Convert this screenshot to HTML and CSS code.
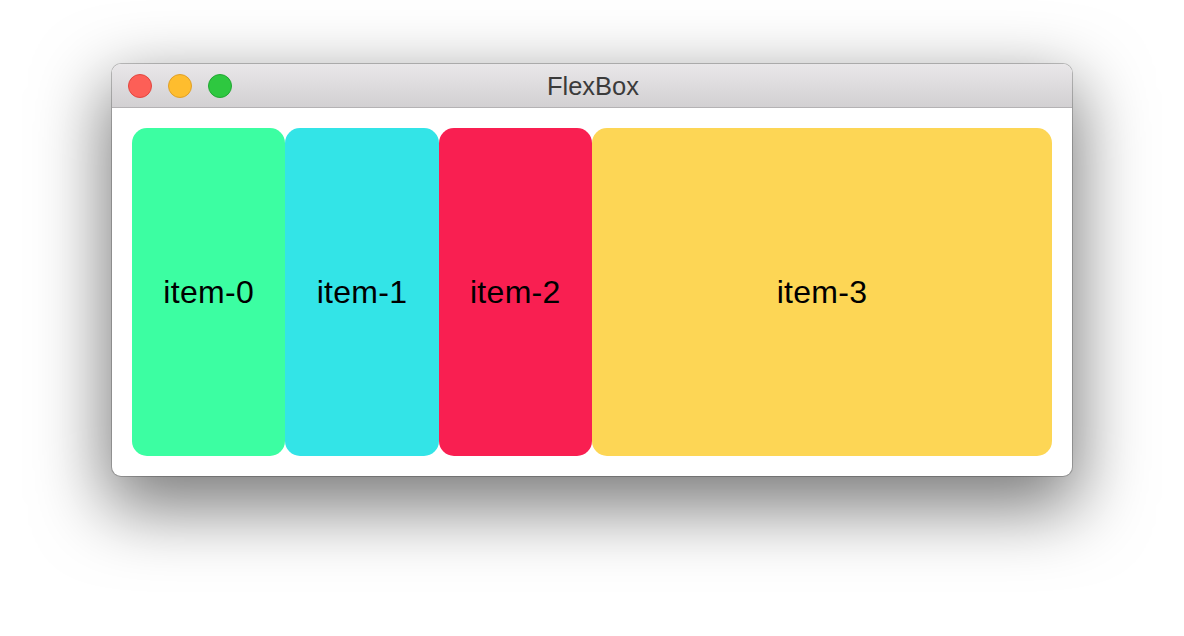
FILE: index.html
```html
<!DOCTYPE html>
<html>
<head>
<meta charset="utf-8">
<title>FlexBox</title>
<link rel="stylesheet" href="styles.css">
</head>
<body>
<div class="stage">
  <div class="window">
    <div class="titlebar">
      <div class="lights">
        <span class="light red"></span>
        <span class="light yellow"></span>
        <span class="light green"></span>
      </div>
      <div class="title">FlexBox</div>
    </div>
    <div class="content">
      <div class="item item-0">item-0</div>
      <div class="item item-1">item-1</div>
      <div class="item item-2">item-2</div>
      <div class="item item-3">item-3</div>
    </div>
  </div>
</div>
</body>
</html>
```
FILE: styles.css
```css
html, body {
  margin: 0;
  padding: 0;
  background: #ffffff;
}
body {
  width: 1184px;
  height: 636px;
  overflow: hidden;
  font-family: "Liberation Sans", Arial, sans-serif;
}
.stage {
  padding: 64px 0 0 112px;
}
.window {
  width: 960px;
  height: 412px;
  border-radius: 9px;
  background: #ffffff;
  box-shadow: 0 0 0 1px rgba(0,0,0,0.22), 0 26px 70px 6px rgba(0,0,0,0.52);
  display: flex;
  flex-direction: column;
  overflow: hidden;
}
.titlebar {
  position: relative;
  height: 43px;
  flex: none;
  background: linear-gradient(#e9e7e9, #d2d0d2);
  border-bottom: 1px solid #b4b2b4;
  display: flex;
  align-items: center;
}
.lights {
  display: flex;
  gap: 16px;
  padding-left: 16px;
  padding-top: 1px;
}
.light {
  width: 22px;
  height: 22px;
  border-radius: 50%;
  border: 1px solid;
}
.red { background: #fd5f57; border-color: #e2463f; }
.yellow { background: #febd2e; border-color: #e0a027; }
.green { background: #2ec840; border-color: #22a733; }
.title {
  position: absolute;
  left: 0;
  right: 0;
  top: 0;
  bottom: 0;
  display: flex;
  align-items: center;
  justify-content: center;
  font-size: 25.5px;
  color: #3b3b3b;
  padding-top: 2px;
  padding-left: 2px;
}
.content {
  flex: 1;
  display: flex;
  padding: 20px;
}
.item {
  display: flex;
  align-items: center;
  justify-content: center;
  border-radius: 15px;
  font-size: 32px;
  letter-spacing: 0.3px;
  color: #000;
  padding-top: 1px;
}
.item-0 { flex: 1; background: #3cfea2; }
.item-1 { flex: 1; background: #33e4e7; }
.item-2 { flex: 1; background: #f91f51; }
.item-3 { flex: 3; background: #fdd655; }
```
